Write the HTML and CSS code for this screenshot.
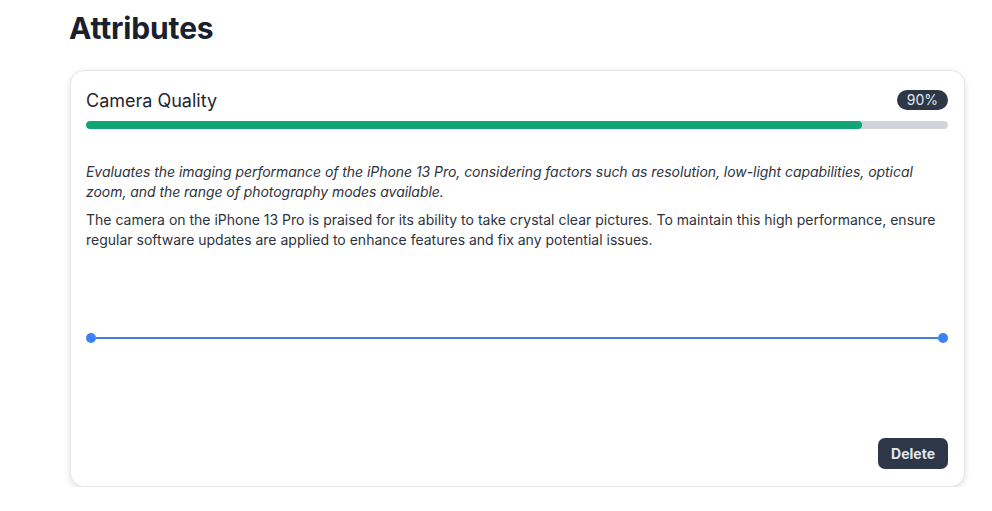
FILE: index.html
```html
<!DOCTYPE html>
<html lang="en">
<head>
<meta charset="utf-8">
<link rel="stylesheet" href="styles.css">
<title>Attributes</title>
</head>
<body>
<main class="page">
  <h1 class="title">Attributes</h1>
  <section class="card">
    <div class="card-head">
      <span class="attr-name">Camera Quality</span>
      <span class="badge">90%</span>
    </div>
    <div class="progress"><div class="progress-fill" style="width: 90%"></div></div>
    <p class="desc">Evaluates the imaging performance of the iPhone 13 Pro, considering factors such as resolution, low-light capabilities, optical zoom, and the range of photography modes available.</p>
    <p class="note">The camera on the iPhone 13 Pro is praised for its ability to take crystal clear pictures. To maintain this high performance, ensure regular software updates are applied to enhance features and fix any potential issues.</p>
    <div class="chart">
      <span class="dot"></span>
      <span class="line"></span>
      <span class="dot"></span>
    </div>
    <div class="actions">
      <button class="btn-delete" type="button">Delete</button>
    </div>
  </section>
</main>
</body>
</html>
```

FILE: styles.css
```css
* { box-sizing: border-box; }
html, body { margin: 0; padding: 0; background: #ffffff; }
body {
  font-family: Inter, "Noto Sans", "Liberation Sans", sans-serif;
  color: #1f2937;
}
.page {
  padding: 8px 28px 0 69px;
}
.title {
  margin: 0 0 22px 0;
  font-size: 30px;
  line-height: 40px;
  font-weight: 700;
  color: #1a202c;
  letter-spacing: -0.15px;
}
.card {
  width: 895px;
  margin-left: 1px;
  border: 1px solid #e5e7eb;
  border-radius: 14px;
  background: #fff;
  box-shadow: 0 2px 7px rgba(0,0,0,0.12);
  padding: 14px 16px 17px 15px;
  display: flex;
  flex-direction: column;
}
.card-head {
  display: flex;
  align-items: center;
  justify-content: space-between;
  height: 30px;
}
.attr-name {
  font-size: 18px;
  color: #1f2633;
}
.badge {
  background: #2d3748;
  color: #e2e8f0;
  font-size: 14px;
  line-height: 20px;
  height: 20px;
  padding: 0 10px;
  border-radius: 10px;
}
.progress {
  margin-top: 6px;
  height: 8px;
  background: #d1d5db;
  border-radius: 4px;
  overflow: hidden;
}
.progress-fill {
  height: 100%;
  background: #10a574;
  border-radius: 4px;
}
.desc {
  margin: 33px 0 0 0;
  font-size: 14px;
  line-height: 20px;
  font-style: italic;
  color: #2d3340;
  letter-spacing: -0.05px;
}
.note {
  margin: 8px 0 0 0;
  font-size: 14px;
  line-height: 20px;
  color: #2d3340;
}
.chart {
  height: 176px;
  display: flex;
  align-items: center;
}
.dot {
  width: 10px;
  height: 10px;
  border-radius: 50%;
  background: #3b82f6;
  flex: none;
}
.line {
  flex: 1;
  height: 2px;
  background: #4a7fd8;
}
.actions {
  margin-top: 12px;
  display: flex;
  justify-content: flex-end;
}
.btn-delete {
  font-family: inherit;
  background: #2d3748;
  color: #e2e8f0;
  font-size: 14px;
  font-weight: 700;
  border: none;
  border-radius: 7px;
  height: 31px;
  padding: 0 13px;
  cursor: pointer;
}
```
